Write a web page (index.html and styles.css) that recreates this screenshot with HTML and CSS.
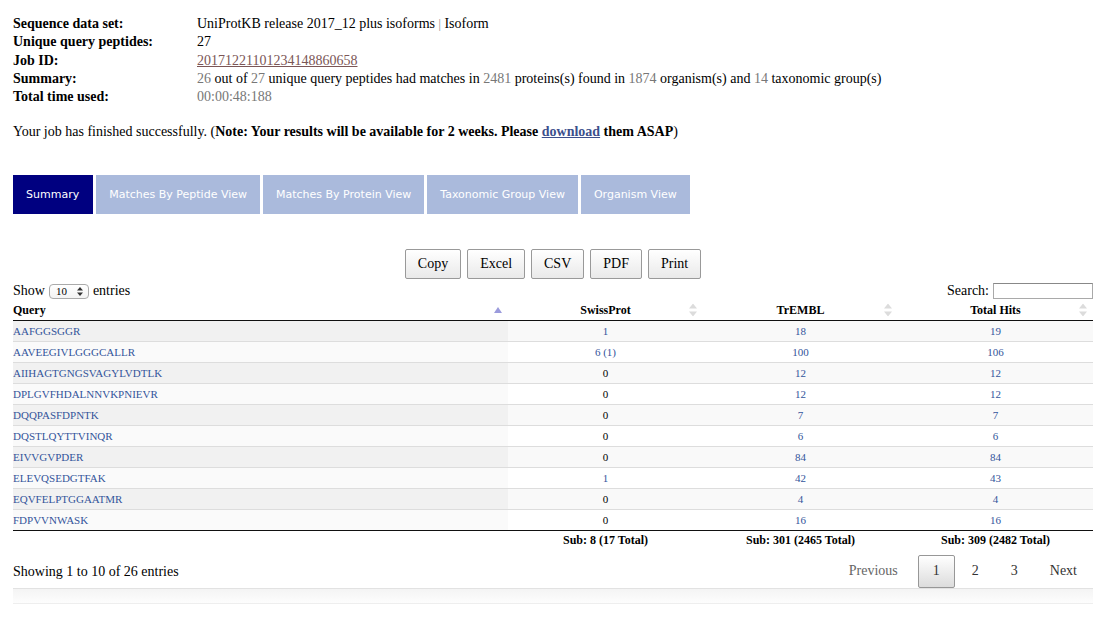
FILE: index.html
```html
<!DOCTYPE html>
<html>
<head>
<meta charset="utf-8">
<link rel="stylesheet" href="styles.css">
</head>
<body>
<div class="page">
  <div class="info">
    <div class="lbl">Sequence data set:</div>
    <div>UniProtKB release 2017_12 plus isoforms <span class="sep">|</span> Isoform</div>
    <div class="lbl">Unique query peptides:</div>
    <div>27</div>
    <div class="lbl">Job ID:</div>
    <div><a class="jobid" href="#">20171221101234148860658</a></div>
    <div class="lbl">Summary:</div>
    <div><span class="num">26</span> out of <span class="num">27</span> unique query peptides had matches in <span class="num">2481</span> proteins(s) found in <span class="num">1874</span> organism(s) and <span class="num">14</span> taxonomic group(s)</div>
    <div class="lbl">Total time used:</div>
    <div class="num">00:00:48:188</div>
  </div>

  <p class="note">Your job has finished successfully. (<b>Note: Your results will be available for 2 weeks. Please <a class="dl" href="#">download</a> them ASAP</b>)</p>

  <nav class="tabs">
    <div class="tab active">Summary</div>
    <div class="tab">Matches By Peptide View</div>
    <div class="tab">Matches By Protein View</div>
    <div class="tab">Taxonomic Group View</div>
    <div class="tab">Organism View</div>
  </nav>

  <div class="buttons">
    <button class="btn">Copy</button>
    <button class="btn">Excel</button>
    <button class="btn">CSV</button>
    <button class="btn">PDF</button>
    <button class="btn">Print</button>
  </div>

  <div class="controls">
    <div class="length">Show <span class="select">10<svg width="6" height="9" viewBox="0 0 6 9"><path d="M3 0 L6 3.5 L0 3.5 Z M3 9 L6 5.5 L0 5.5 Z" fill="#333"/></svg></span> entries</div>
    <div class="search">Search: <input class="search-input" type="text"></div>
  </div>

  <table class="grid">
    <colgroup>
      <col class="c-query"><col class="c-num"><col class="c-num"><col class="c-num">
    </colgroup>
    <thead>
      <tr>
        <th class="left">Query<span class="sort asc"><svg width="8" height="6" viewBox="0 0 8 6"><path d="M4 0 L8 6 L0 6 Z" fill="#9b9bdc"/></svg></span></th>
        <th>SwissProt<span class="sort"><svg width="8" height="13" viewBox="0 0 8 13"><path d="M4 0 L8 5 L0 5 Z M4 13 L8 8 L0 8 Z" fill="#dcdcdc"/></svg></span></th>
        <th>TrEMBL<span class="sort"><svg width="8" height="13" viewBox="0 0 8 13"><path d="M4 0 L8 5 L0 5 Z M4 13 L8 8 L0 8 Z" fill="#dcdcdc"/></svg></span></th>
        <th>Total Hits<span class="sort"><svg width="8" height="13" viewBox="0 0 8 13"><path d="M4 0 L8 5 L0 5 Z M4 13 L8 8 L0 8 Z" fill="#dcdcdc"/></svg></span></th>
      </tr>
    </thead>
    <tbody>
      <tr><td class="q"><a href="#">AAFGGSGGR</a></td><td><a href="#">1</a></td><td><a href="#">18</a></td><td><a href="#">19</a></td></tr>
      <tr><td class="q"><a href="#">AAVEEGIVLGGGCALLR</a></td><td><a href="#">6 (1)</a></td><td><a href="#">100</a></td><td><a href="#">106</a></td></tr>
      <tr><td class="q"><a href="#">AIIHAGTGNGSVAGYLVDTLK</a></td><td>0</td><td><a href="#">12</a></td><td><a href="#">12</a></td></tr>
      <tr><td class="q"><a href="#">DPLGVFHDALNNVKPNIEVR</a></td><td>0</td><td><a href="#">12</a></td><td><a href="#">12</a></td></tr>
      <tr><td class="q"><a href="#">DQQPASFDPNTK</a></td><td>0</td><td><a href="#">7</a></td><td><a href="#">7</a></td></tr>
      <tr><td class="q"><a href="#">DQSTLQYTTVINQR</a></td><td>0</td><td><a href="#">6</a></td><td><a href="#">6</a></td></tr>
      <tr><td class="q"><a href="#">EIVVGVPDER</a></td><td>0</td><td><a href="#">84</a></td><td><a href="#">84</a></td></tr>
      <tr><td class="q"><a href="#">ELEVQSEDGTFAK</a></td><td><a href="#">1</a></td><td><a href="#">42</a></td><td><a href="#">43</a></td></tr>
      <tr><td class="q"><a href="#">EQVFELPTGGAATMR</a></td><td>0</td><td><a href="#">4</a></td><td><a href="#">4</a></td></tr>
      <tr><td class="q"><a href="#">FDPVVNWASK</a></td><td>0</td><td><a href="#">16</a></td><td><a href="#">16</a></td></tr>
    </tbody>
    <tfoot>
      <tr><td></td><td>Sub: 8 (17 Total)</td><td>Sub: 301 (2465 Total)</td><td>Sub: 309 (2482 Total)</td></tr>
    </tfoot>
  </table>

  <div class="bottom">
    <div class="showing">Showing 1 to 10 of 26 entries</div>
    <div class="paging">
      <span class="pbtn disabled">Previous</span>
      <span class="pbtn current">1</span>
      <span class="pbtn">2</span>
      <span class="pbtn">3</span>
      <span class="pbtn">Next</span>
    </div>
  </div>
  <div class="scrollbar"></div>
</div>
</body>
</html>
```

FILE: styles.css
```css
body {
  margin: 8px;
  font-family: "Liberation Serif", "Times New Roman", serif;
  font-size: 14px;
  color: #000;
  background: #fff;
}

.page {
  width: 1080px;
  margin-left: 5px;
}

.info {
  display: grid;
  grid-template-columns: 184px auto;
  line-height: 18.25px;
  padding-top: 7px;
}

.lbl { font-weight: bold; }

.sep { color: #888; font-size: 12px; }

.num { color: #777; }

.jobid { color: #7b5656; }

.note {
  margin: 17px 0 0;
  line-height: 18px;
}

.dl { color: #3c4f8c; }

.tabs {
  display: flex;
  gap: 3px;
  margin-top: 34px;
  font-family: "DejaVu Sans", Verdana, sans-serif;
  font-size: 11px;
}

.tab {
  height: 39px;
  display: flex;
  align-items: center;
  padding: 0 13px;
  background: #aabadc;
  color: #fff;
}

.tab.active {
  background: #000080;
  padding: 0 14px 0 13px;
}

.buttons {
  display: flex;
  justify-content: center;
  gap: 6px;
  margin-top: 35px;
}

.btn {
  height: 30px;
  padding: 0 12px;
  font-family: "Liberation Serif", "Times New Roman", serif;
  font-size: 14px;
  color: #000;
  border: 1px solid #999;
  border-radius: 2px;
  background: linear-gradient(#fff, #e9e9e9);
}

.controls {
  display: flex;
  justify-content: space-between;
  align-items: center;
  height: 16px;
  margin-top: 4px;
  line-height: 16px;
}

.length { display: flex; align-items: center; gap: 4px; }

.select {
  display: inline-flex;
  align-items: center;
  justify-content: space-between;
  width: 27px;
  height: 13px;
  padding: 0 5px 0 6px;
  border: 1px solid #aaa;
  border-radius: 4px;
  font-size: 11px;
  line-height: 13px;
  background: linear-gradient(#fff, #f3f3f3);
}

.search { display: flex; align-items: center; gap: 4px; }

.search-input {
  width: 96px;
  height: 12px;
  margin: 0;
  padding: 1px;
  border: 1px solid #a9a9a9;
  border-top-color: #888;
}

.grid {
  width: 1080px;
  margin-top: 1px;
  border-collapse: collapse;
  table-layout: fixed;
  font-size: 11px;
}

.c-query { width: 495px; }
.c-num { width: 195px; }

.grid th {
  position: relative;
  height: 20px;
  padding: 0;
  font-size: 12px;
  font-weight: bold;
  text-align: center;
  border-bottom: 1px solid #111;
}

.grid th.left { text-align: left; }

.sort {
  position: absolute;
  right: 6px;
  top: 50%;
  transform: translateY(-50%);
  display: flex;
}

.grid td {
  height: 20px;
  padding: 0;
  text-align: center;
  line-height: 20px;
}

.grid td.q { text-align: left; }

.grid tbody tr + tr td { border-top: 1px solid #ddd; }

.grid tbody tr:nth-child(odd) td { background: #f9f9f9; }
.grid tbody tr:nth-child(odd) td.q { background: #f1f1f1; }
.grid tbody tr:nth-child(even) td.q { background: #fafafa; }

.grid a { color: #34559b; text-decoration: none; }

.grid tfoot td {
  height: 18px;
  line-height: 19px;
  border-top: 1px solid #111;
  font-size: 12px;
  font-weight: bold;
}

.bottom {
  display: flex;
  justify-content: space-between;
  align-items: center;
  margin-top: 5px;
}

.paging { display: flex; }

.pbtn {
  margin-left: 2px;
  padding: 7px 14px 8px;
  line-height: 16px;
  border: 1px solid transparent;
  border-radius: 2px;
  color: #333;
}

.pbtn.disabled { color: #666; padding-right: 17px; }

.pbtn.current {
  border-color: #979797;
  background: linear-gradient(#fff, #dcdcdc);
}

.pbtn:last-child { padding-right: 15px; }

.scrollbar {
  height: 14px;
  border-top: 1px solid #e2e2e2;
  border-bottom: 1px solid #eee;
  background: linear-gradient(#f4f4f4, #fdfdfd);
}
```
